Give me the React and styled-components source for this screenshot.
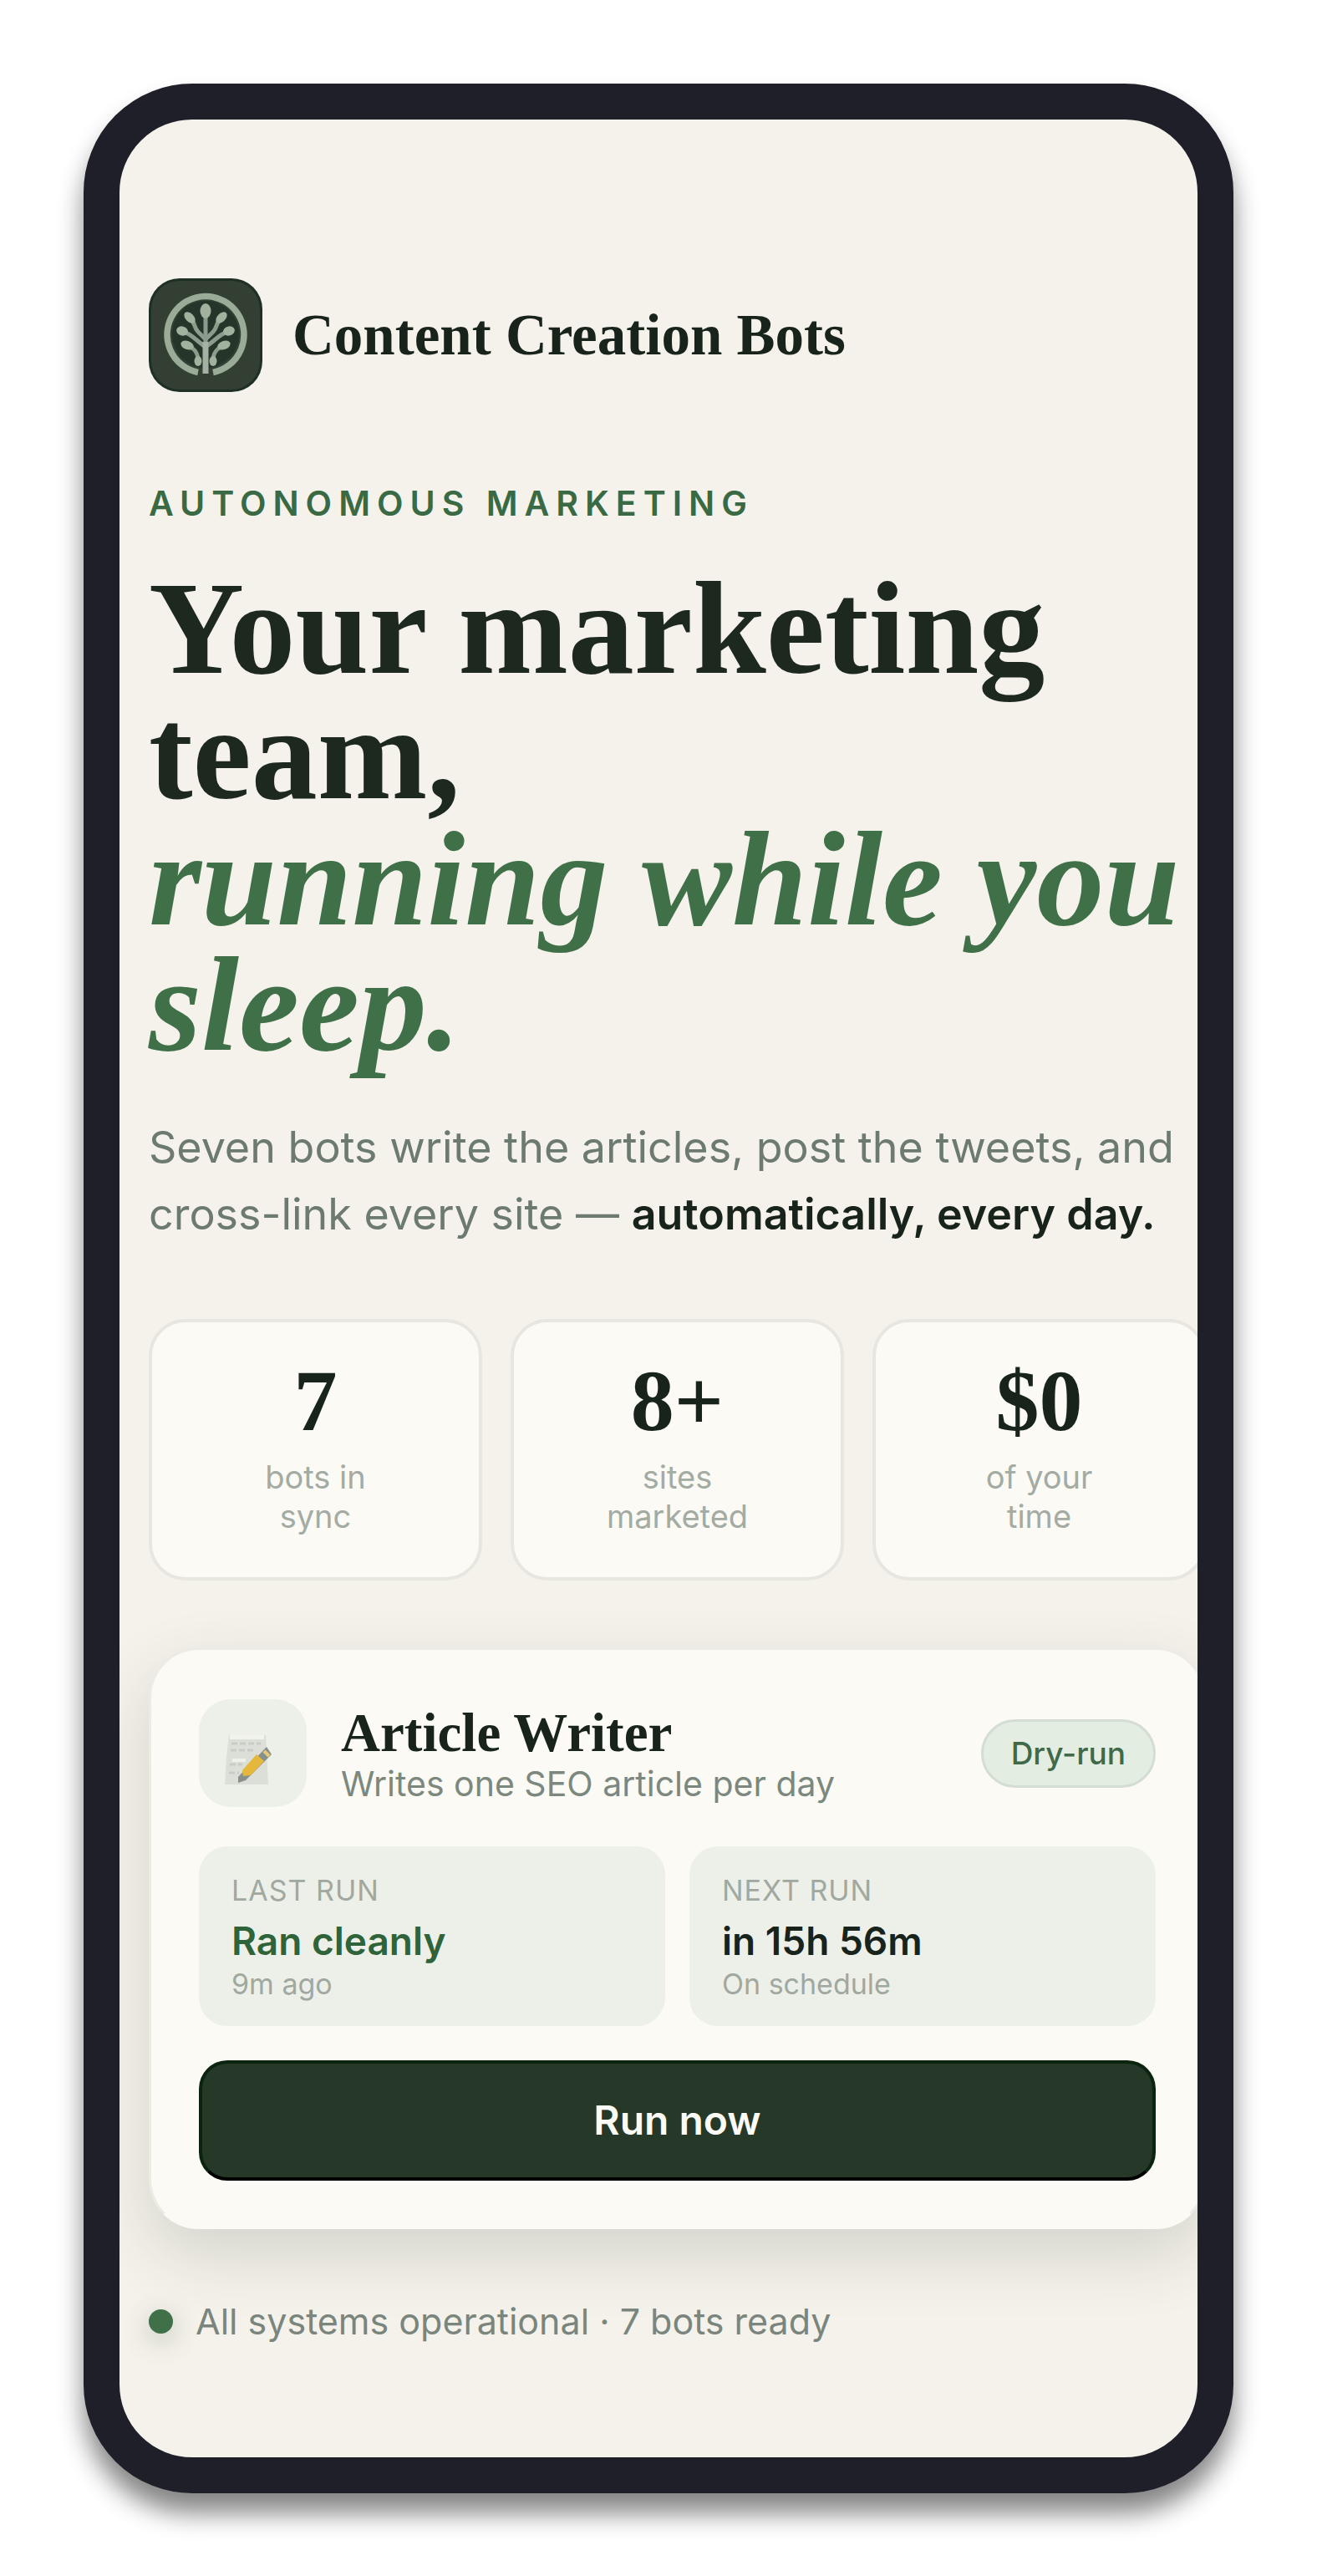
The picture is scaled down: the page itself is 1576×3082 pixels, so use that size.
import styled, { createGlobalStyle } from "styled-components"

const GlobalStyle = createGlobalStyle`
* {
    box-sizing: border-box;
}
body {
    margin: 0;
    background: #ffffff;
    color: #18241b;
    font-family: Inter, "Liberation Sans", sans-serif;
}
h1, h2, p, dl, dd {
    margin: 0;
}
`

const serif = `"Liberation Serif", "Times New Roman", serif`

const Page = styled.div`
padding: 100px;
`

const Phone = styled.main`
border: 43px solid #1f1f29;
border-radius: 130px;
background: #f5f2eb;
box-shadow: 0 24px 30px rgba(0, 0, 0, 0.48);
`

const Screen = styled.div`
overflow: hidden;
border-radius: 87px;
padding: 190px 0 133px 35px;
`

/* cards run slightly past the right edge of the screen */
const Content = styled.div`
margin-right: -10px;
`

const Header = styled.header`
display: flex;
align-items: center;
gap: 36px;
`

const Logo = styled.svg`
width: 136px;
height: 136px;
flex: none;
`

const Brand = styled.span`
font-family: ${serif};
font-size: 69px;
font-weight: 700;
line-height: 80px;
`

const Eyebrow = styled.p`
margin-top: 108px;
font-size: 41px;
font-weight: 600;
line-height: 50px;
letter-spacing: 8px;
text-transform: uppercase;
color: #3a6a43;
`

const Title = styled.h1`
margin-top: 50px;
font-family: ${serif};
font-size: 158px;
font-weight: 700;
line-height: 150px;
color: #1d291f;
`

const Accent = styled.em`
display: block;
font-size: 162px;
color: #3f7048;
`

const Lead = styled.p`
margin-top: 56px;
font-size: 52px;
line-height: 80px;
color: #6c7a6f;
`

const Strong = styled.strong`
font-weight: 600;
color: #18241b;
`

const Stats = styled.dl`
display: grid;
grid-template-columns: repeat(3, 1fr);
gap: 34px;
margin-top: 85px;
`

const Stat = styled.div`
display: flex;
flex-direction: column-reverse;
align-items: center;
justify-content: flex-end;
padding: 38px 96px 49px;
border: 4px solid #e7e7df;
border-radius: 44px;
background: #fbfaf5;
text-align: center;
`

const StatValue = styled.dd`
font-family: ${serif};
font-size: 104px;
font-weight: 700;
line-height: 112px;
`

const StatLabel = styled.dt`
margin-top: 12px;
font-size: 38px;
line-height: 47px;
color: #a3aba3;
`

const Card = styled.section`
margin-top: 80px;
padding: 59px 57px 55px;
border: 3px solid #ecebe4;
border-bottom-color: #fbfaf5;
border-radius: 60px;
background: #fbfaf5;
box-shadow: 0 30px 80px rgba(35, 55, 35, 0.16);
`

const CardHead = styled.div`
display: flex;
align-items: center;
gap: 41px;
`

const IconTile = styled.div`
display: flex;
align-items: center;
justify-content: center;
width: 129px;
height: 129px;
flex: none;
border-radius: 38px;
background: #edf0e9;
`

const CardText = styled.div`
flex: 1;
padding-top: 6px;
`

const CardTitle = styled.h2`
font-family: ${serif};
font-size: 65px;
font-weight: 700;
line-height: 66px;
`

const CardSub = styled.p`
font-size: 41px;
line-height: 56px;
color: #7c887e;
`

const Pill = styled.span`
padding: 16px 33px;
border: 3px solid #d4ddd1;
border-radius: 41px;
background: #e4ede1;
font-size: 37px;
font-weight: 500;
line-height: 44px;
white-space: nowrap;
color: #40694a;
`

const Runs = styled.div`
display: grid;
grid-template-columns: repeat(2, 1fr);
gap: 29px;
margin-top: 47px;
`

const Run = styled.div`
padding: 29px 39px;
border-radius: 34px;
background: #edf0e9;
`

const RunLabel = styled.p`
font-size: 34px;
line-height: 48px;
letter-spacing: 1px;
text-transform: uppercase;
color: #a0a8a0;
`

const RunValue = styled.p`
margin-top: 6px;
font-size: 46px;
font-weight: 600;
line-height: 60px;
color: ${(props) => (props.$good ? "#2f6339" : "#18241b")};
`

const RunNote = styled.p`
font-size: 34px;
line-height: 43px;
color: #a0a8a0;
`

const RunButton = styled.button`
display: block;
width: 100%;
margin-top: 41px;
padding: 40px;
border: 4px solid #0a2410;
border-bottom-color: #000000;
border-radius: 34px;
background: #263827;
font-family: inherit;
font-size: 48px;
font-weight: 600;
line-height: 56px;
color: #fbfaf5;
cursor: pointer;
`

const Status = styled.p`
display: flex;
align-items: center;
gap: 27px;
margin-top: 80px;
font-size: 43px;
line-height: 60px;
color: #7a867d;
`

const Dot = styled.span`
width: 29px;
height: 29px;
flex: none;
border-radius: 50%;
background: #3f7048;
box-shadow: 0 8px 32px rgba(40, 70, 45, 0.3);
`

const stats = [
    { value: "7", label: "bots in sync" },
    { value: "8+", label: "sites marketed" },
    { value: "$0", label: "of your time" },
]

const runs = [
    { label: "Last run", value: "Ran cleanly", note: "9m ago", good: true },
    { label: "Next run", value: "in 15h 56m", note: "On schedule" },
]

const TreeLogo = () => (
    <Logo viewBox="0 0 136 136" aria-hidden="true">
        <rect width="136" height="136" rx="37" fill="#1e3023" />
        <rect x="3" y="3" width="130" height="130" rx="34" fill="#333f33" />
        <circle cx="68" cy="67" r="40" fill="#26352a" />
        <path d="M59 112.500 A46 46 0 1 1 77 112.500" fill="none" stroke="#9aac97" strokeWidth="7.500" />
        <g fill="none" stroke="#8c9b8b" strokeWidth="5" strokeLinecap="round">
            <path d="M68 44V84" />
            <path d="M50 48C55 52 54 59 59 64L68 73L77 64C82 59 81 52 86 48" />
            <path d="M41 64C51 66 57 75 68 82C79 75 85 66 95 64" />
            <path d="M47 81C55 84 59 89 59 99M89 81C81 84 77 89 77 99" />
        </g>
        <path d="M68 76V114" stroke="#a5b2a3" strokeWidth="7" />
        <g fill="#a2b29e">
            <ellipse cx="68" cy="39" rx="6.500" ry="9" />
            <ellipse cx="49" cy="47" rx="5" ry="8" transform="rotate(-45 49 47)" />
            <ellipse cx="87" cy="47" rx="5" ry="8" transform="rotate(45 87 47)" />
            <ellipse cx="40" cy="63" rx="7" ry="5.500" transform="rotate(15 40 63)" />
            <ellipse cx="96" cy="63" rx="7" ry="5.500" transform="rotate(-15 96 63)" />
            <ellipse cx="46" cy="80" rx="8" ry="5" transform="rotate(20 46 80)" />
            <ellipse cx="90" cy="80" rx="8" ry="5" transform="rotate(-20 90 80)" />
            <ellipse cx="59" cy="99" rx="4.500" ry="6" />
            <ellipse cx="77" cy="99" rx="4.500" ry="6" />
        </g>
    </Logo>
)

const MemoIcon = () => (
    <svg width="129" height="129" viewBox="0 0 129 129" aria-hidden="true">
        <path d="M36 43H80L83 102H31L33 70Z" fill="#dcded8" />
        <path d="M37 43H78V48H37Z" fill="#f3f3ee" />
        <path d="M39 53H74M38 61H66M37 78H52M36 88H48" stroke="#c9ccc6" strokeWidth="3" strokeDasharray="7 3" />
        <path d="M40 73H56" stroke="#f0f0eb" strokeWidth="4" />
        <path d="M47 93L81 57L87 66L56 97L47 100Z" fill="#87908a" />
        <path d="M52 85L69 66L78 74L62 91L53 92Z" fill="#e5b73b" />
        <path d="M78 62L84 68" stroke="#e5c878" strokeWidth="4" />
    </svg>
)

const App = () => {
    return (
        <>
            <GlobalStyle />
            <Page>
                <Phone>
                    <Screen>
                        <Content>
                            <Header>
                                <TreeLogo />
                                <Brand>Content Creation Bots</Brand>
                            </Header>
                            <Eyebrow>Autonomous marketing</Eyebrow>
                            <Title>
                                Your marketing team,
                                <Accent>running while you sleep.</Accent>
                            </Title>
                            <Lead>
                                Seven bots write the articles, post the tweets, and
                                cross-link every site — <Strong>automatically, every day.</Strong>
                            </Lead>
                            <Stats>
                                {stats.map((stat) => (
                                    <Stat key={stat.label}>
                                        <StatLabel>{stat.label}</StatLabel>
                                        <StatValue>{stat.value}</StatValue>
                                    </Stat>
                                ))}
                            </Stats>
                            <Card>
                                <CardHead>
                                    <IconTile>
                                        <MemoIcon />
                                    </IconTile>
                                    <CardText>
                                        <CardTitle>Article Writer</CardTitle>
                                        <CardSub>Writes one SEO article per day</CardSub>
                                    </CardText>
                                    <Pill>Dry-run</Pill>
                                </CardHead>
                                <Runs>
                                    {runs.map((run) => (
                                        <Run key={run.label}>
                                            <RunLabel>{run.label}</RunLabel>
                                            <RunValue $good={run.good}>{run.value}</RunValue>
                                            <RunNote>{run.note}</RunNote>
                                        </Run>
                                    ))}
                                </Runs>
                                <RunButton type="button">Run now</RunButton>
                            </Card>
                            <Status>
                                <Dot />
                                All systems operational · 7 bots ready
                            </Status>
                        </Content>
                    </Screen>
                </Phone>
            </Page>
        </>
    )
}

export default App
